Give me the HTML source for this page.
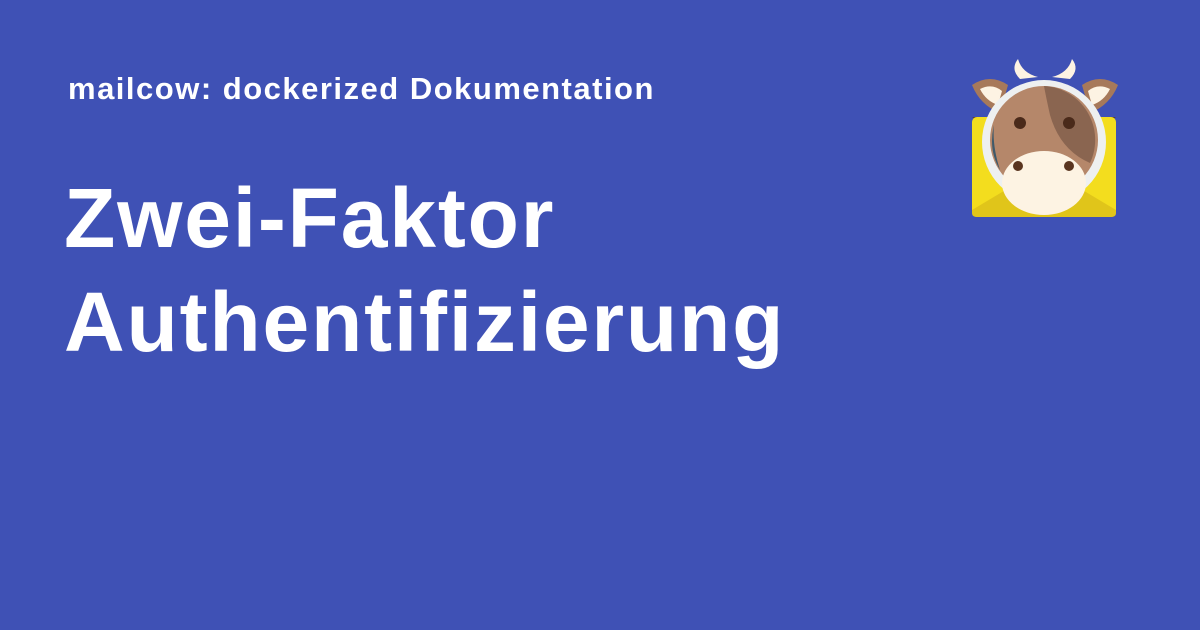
<!DOCTYPE html>
<html><head><meta charset="utf-8"><style>
html,body{margin:0;padding:0}
body{width:1200px;height:630px;background:#3f51b5;position:relative;overflow:hidden;font-family:"Liberation Sans",sans-serif;color:#fff}
.site{position:absolute;left:68px;top:71px;font-size:31px;font-weight:bold;letter-spacing:1.5px}
.title{position:absolute;left:64px;top:166px;font-size:84px;font-weight:bold;line-height:104px;letter-spacing:1.8px}
svg{position:absolute;left:960px;top:55px}
</style></head><body>
<div class="site">mailcow: dockerized Dokumentation</div>
<div class="title">Zwei-Faktor<br>Authentifizierung</div>
<svg width="170" height="170" viewBox="0 0 170 170">
<path d="M12 62 L84 108 L156 62 Z" fill="#5d3d2a"/>
<rect x="12" y="62" width="144" height="100" rx="5" fill="#f3dd1e"/>
<path d="M12 155 L84 112 L156 155 L156 158 Q156 162 151 162 L17 162 Q12 162 12 158Z" fill="#e0c51a"/>
<path d="M60 24 Q50 14 58 4 Q62 18 78 22Z" fill="#fdf3e3"/>
<path d="M110 24 Q120 14 112 4 Q108 18 92 22Z" fill="#fdf3e3"/>
<path d="M12 30 Q30 18 48 30 L40 58 Q20 50 12 30Z" fill="#a7795a"/>
<path d="M158 30 Q140 18 122 30 L130 58 Q150 50 158 30Z" fill="#a7795a"/>
<path d="M20 34 Q32 28 42 36 L38 50 Q26 46 20 34Z" fill="#fdf3e3"/>
<path d="M150 34 Q138 28 128 36 L132 50 Q144 46 150 34Z" fill="#fdf3e3"/>
<circle cx="84" cy="87" r="62" fill="#eef0f0"/>
<circle cx="84" cy="85" r="54" fill="#b5876a"/>
<path d="M84 31 A54 54 0 0 1 130 108 Q100 95 90 60 Q86 42 84 31Z" fill="#8a6550"/>
<path d="M34 70 Q28 95 40 115 Q32 90 34 70Z" fill="#3f5a6a"/>
<ellipse cx="84" cy="128" rx="42" ry="32" fill="#fdf3e3"/>
<circle cx="60" cy="68" r="6" fill="#4a2a1a"/><circle cx="109" cy="68" r="6" fill="#4a2a1a"/>
<circle cx="58" cy="111" r="5" fill="#5a3520"/><circle cx="109" cy="111" r="5" fill="#5a3520"/>
</svg>
</body></html>
